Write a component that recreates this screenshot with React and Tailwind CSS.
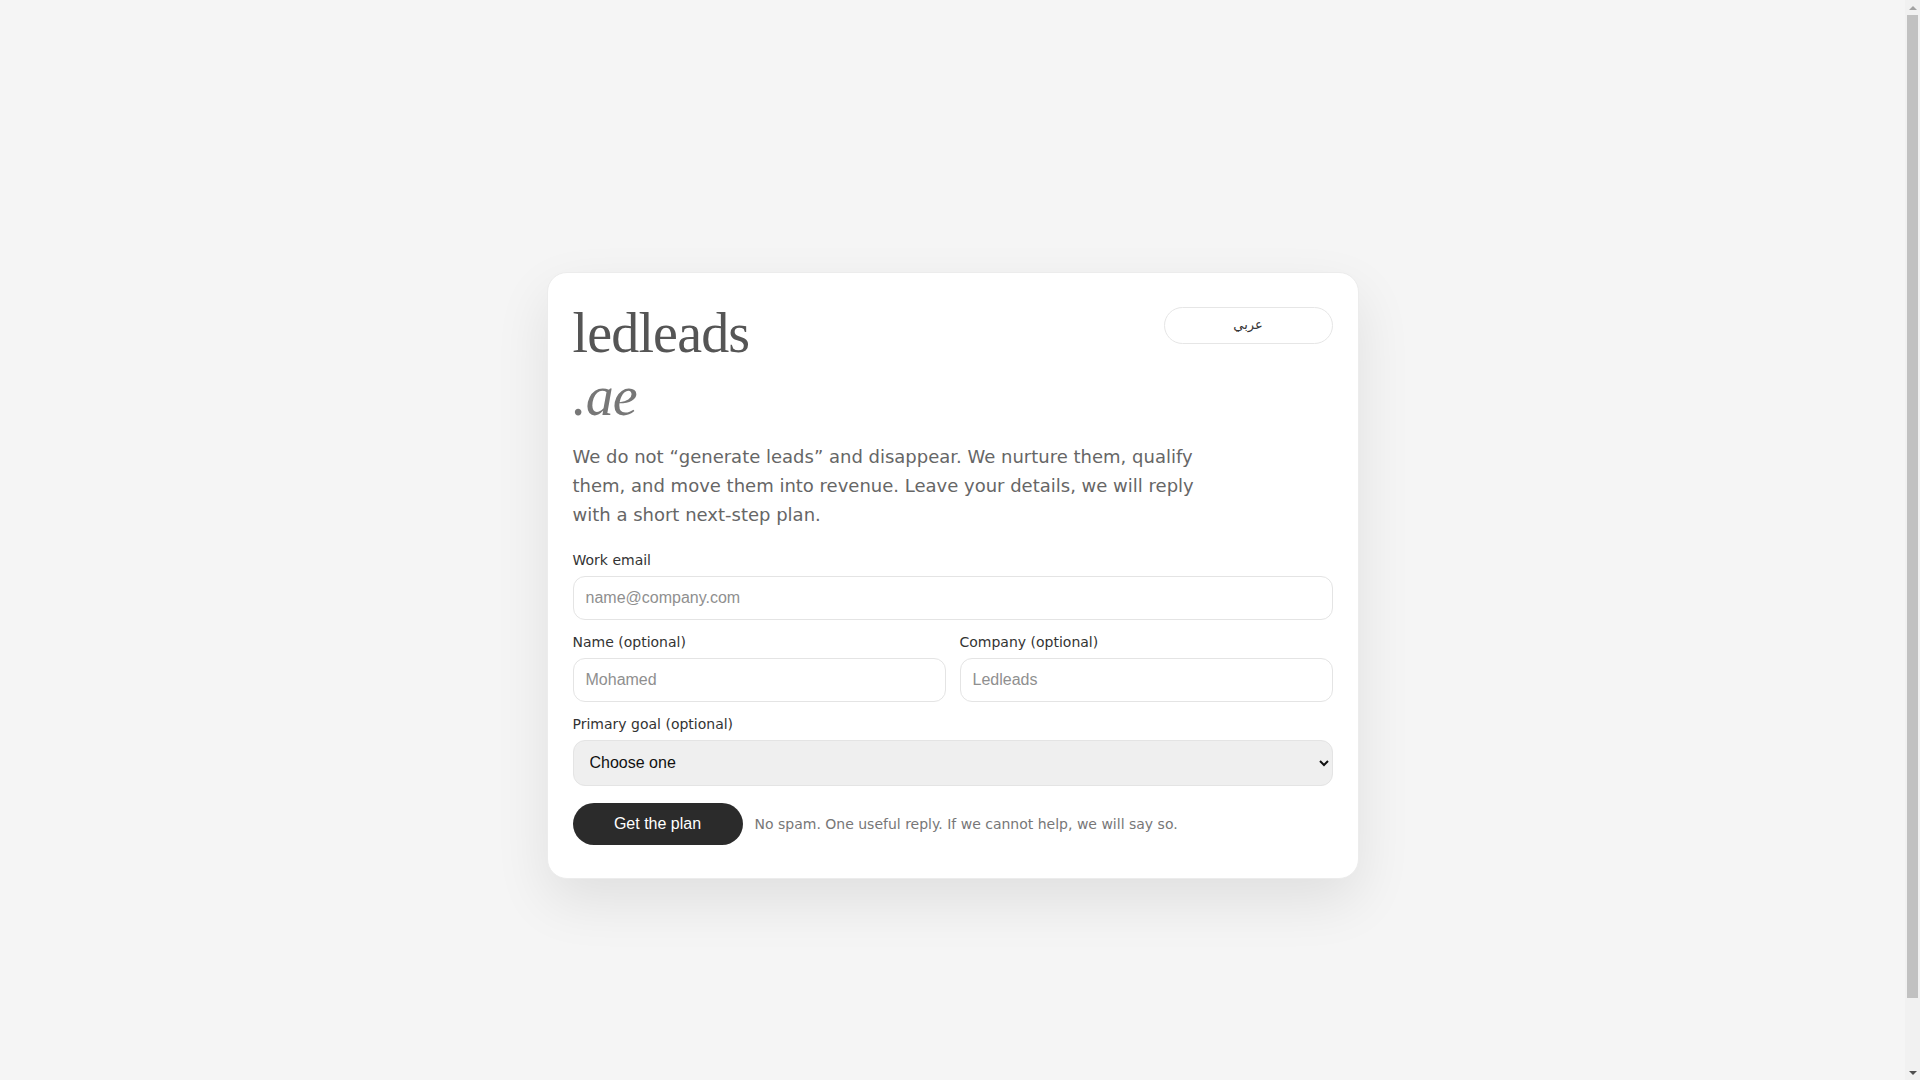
export default function App() {
    return (
        <div className="flex bg-[#f5f5f5] font-['DejaVu_Sans',sans-serif]">
            <main className="flex-1 pt-[35px] pb-[37px]">
                <div className="min-h-screen flex items-center justify-center">
                    <div className="w-[812px] bg-white border border-[#ececec] rounded-[20px] px-[25px] pt-[25px] pb-[33px] shadow-[0_22px_55px_rgba(0,0,0,0.09)]">
                        <div className="flex justify-between items-start">
                            <h1 className="mt-1 font-['Liberation_Serif',serif] text-[56px] leading-[63px] tracking-[-0.015em] text-[#555555] font-normal">
                                ledleads
                                <span className="block italic text-[#777777]">.ae</span>
                            </h1>
                            <button className="mt-[9px] w-[169px] h-[37px] rounded-full border border-[#e6e6e6] bg-white text-[13px] text-[#333333] font-['DejaVu_Sans',sans-serif]">
                                عربي
                            </button>
                        </div>

                        <p className="mt-[14px] max-w-[640px] text-[18px] leading-[29px] text-[#666666]">
                            We do not “generate leads” and disappear. We nurture them, qualify them, and move them into revenue. Leave your details, we will reply with a short next-step plan.
                        </p>

                        <form className="mt-[21px] flex flex-col gap-3" onSubmit={e => e.preventDefault()}>
                            <div>
                                <label className="block mb-[6px] text-sm leading-5 text-[#333333]">Work email</label>
                                <input
                                    type="email"
                                    placeholder="name@company.com"
                                    className="w-full h-[44px] px-3 rounded-xl border border-[#e4e4e4] bg-white font-['Liberation_Sans',sans-serif] text-base text-[#222222] placeholder:text-[#8f8f8f] outline-none"
                                />
                            </div>

                            <div className="grid grid-cols-2 gap-[14px]">
                                <div>
                                    <label className="block mb-[6px] text-sm leading-5 text-[#333333]">Name (optional)</label>
                                    <input
                                        type="text"
                                        placeholder="Mohamed"
                                        className="w-full h-[44px] px-3 rounded-xl border border-[#e4e4e4] bg-white font-['Liberation_Sans',sans-serif] text-base text-[#222222] placeholder:text-[#8f8f8f] outline-none"
                                    />
                                </div>
                                <div>
                                    <label className="block mb-[6px] text-sm leading-5 text-[#333333]">Company (optional)</label>
                                    <input
                                        type="text"
                                        placeholder="Ledleads"
                                        className="w-full h-[44px] px-3 rounded-xl border border-[#e4e4e4] bg-white font-['Liberation_Sans',sans-serif] text-base text-[#222222] placeholder:text-[#8f8f8f] outline-none"
                                    />
                                </div>
                            </div>

                            <div>
                                <label className="block mb-[6px] text-sm leading-5 text-[#333333]">Primary goal (optional)</label>
                                <select className="w-full h-[46px] px-3 rounded-xl border border-[#e4e4e4] bg-[#efefef] font-['Liberation_Sans',sans-serif] text-base text-[#111111] outline-none">
                                    <option>Choose one</option>
                                    <option>More qualified leads</option>
                                    <option>Faster follow-up</option>
                                    <option>Higher conversion</option>
                                </select>
                            </div>

                            <div className="mt-[5px] flex items-center gap-3">
                                <button
                                    type="submit"
                                    className="w-[170px] h-[42px] rounded-full bg-[#2b2b2b] text-white font-['Liberation_Sans',sans-serif] text-base"
                                >
                                    Get the plan
                                </button>
                                <span className="text-sm text-[#777777]">
                                    No spam. One useful reply. If we cannot help, we will say so.
                                </span>
                            </div>
                        </form>
                    </div>
                </div>
            </main>

            {/* classic scrollbar strip as seen in the capture */}
            <div className="sticky top-0 w-[15px] h-screen shrink-0 bg-[#f1f1f1] flex flex-col items-center">
                <div className="h-[15px] flex items-center justify-center">
                    <div className="w-0 h-0 border-x-[4px] border-x-transparent border-b-[4px] border-b-[#a3a3a3]" />
                </div>
                <div className="w-[11px] h-[983px] bg-[#c1c1c1]" />
                <div className="flex-1" />
                <div className="h-[15px] flex items-center justify-center">
                    <div className="w-0 h-0 border-x-[4px] border-x-transparent border-t-[4px] border-t-[#505050]" />
                </div>
            </div>
        </div>
    );
}
